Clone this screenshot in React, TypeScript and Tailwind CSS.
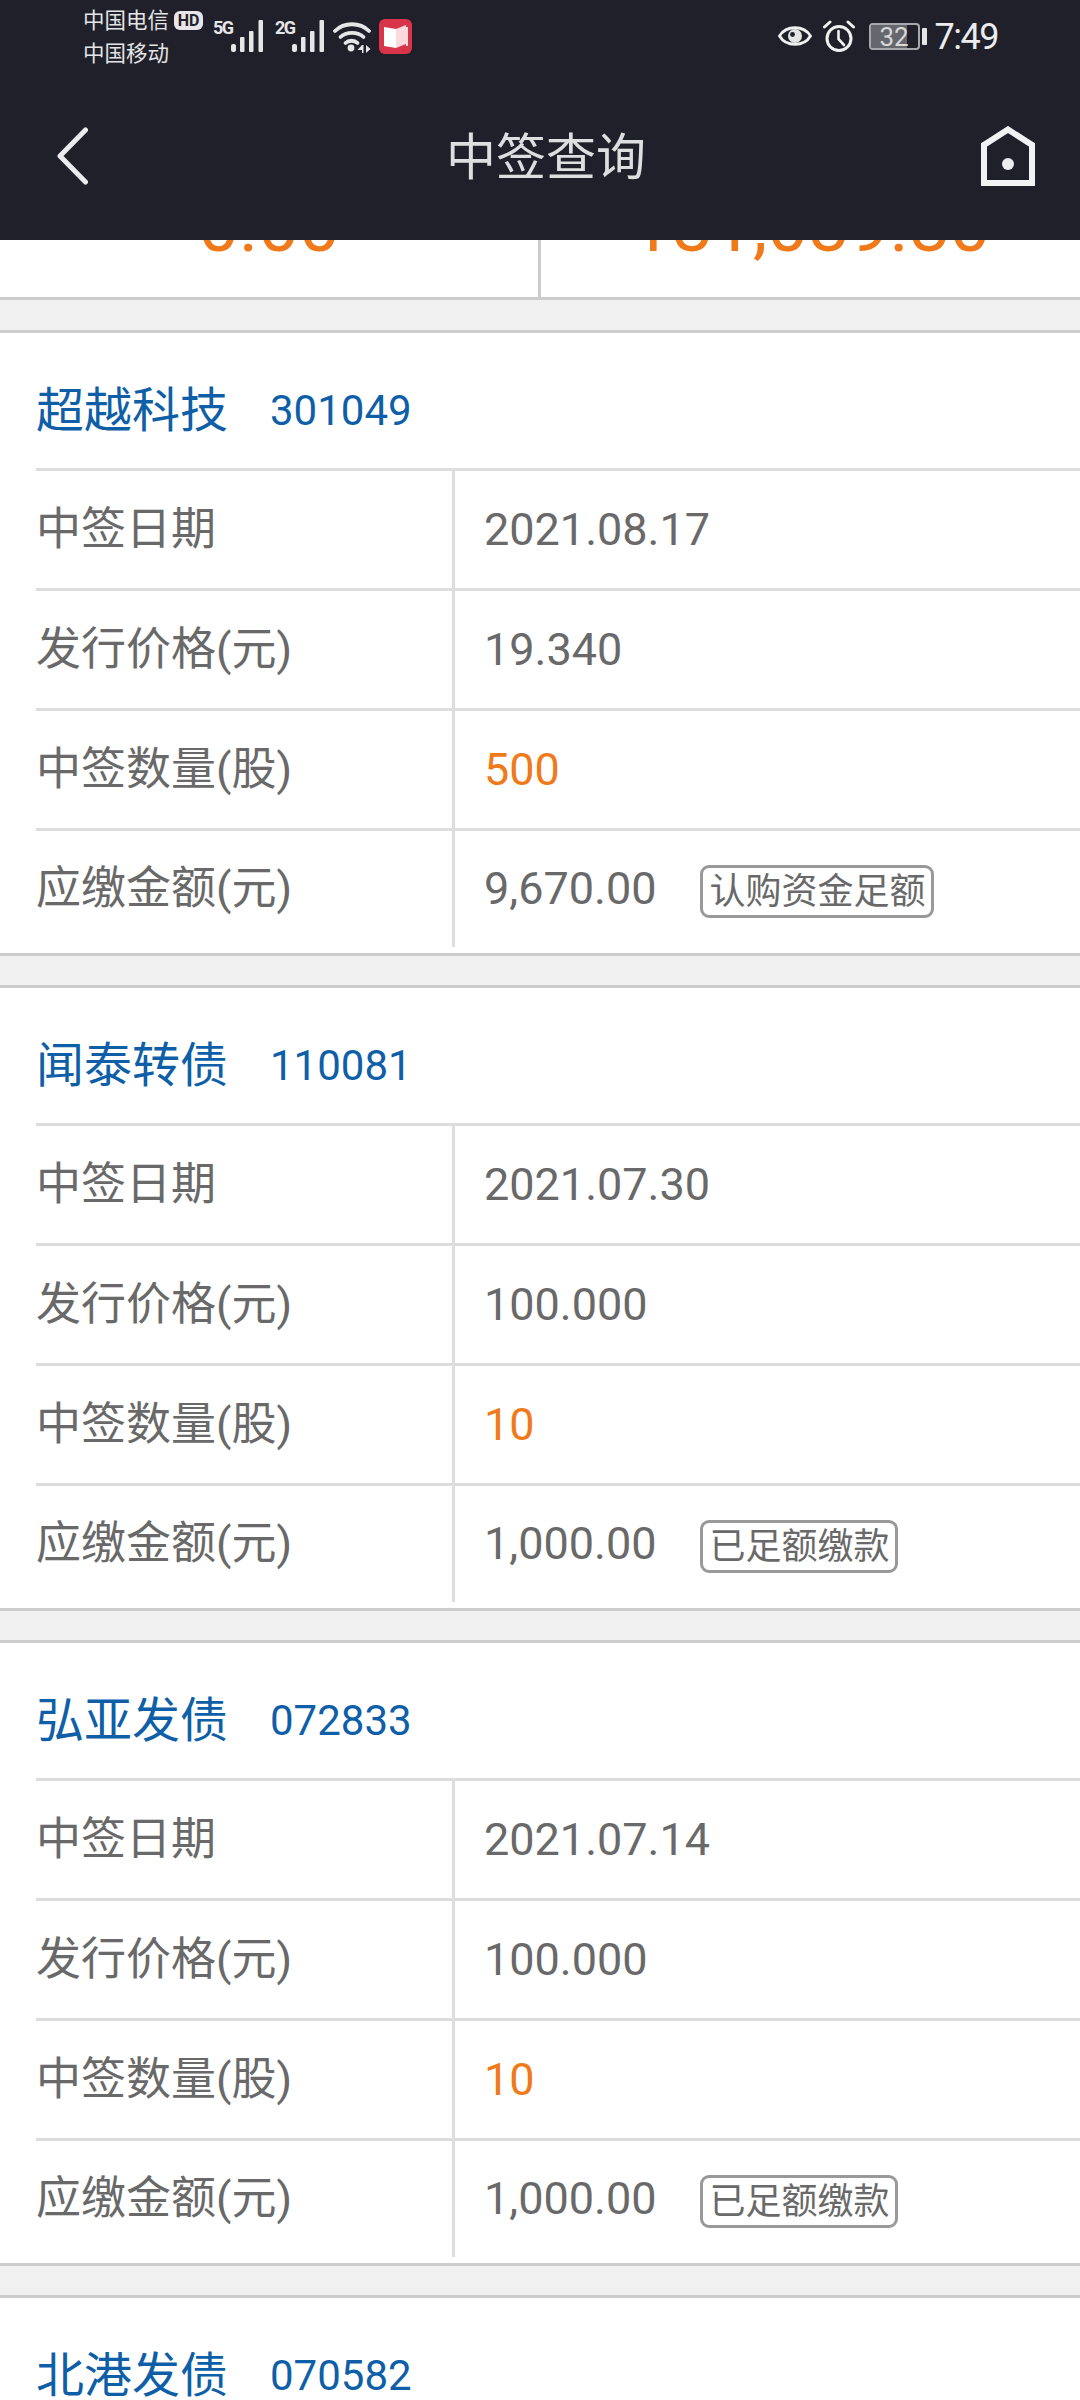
const font = { fontFamily: '"Roboto", "Noto Sans CJK SC", sans-serif' };

type Stock = {
  name: string;
  code: string;
  date: string;
  price: string;
  qty: string;
  amount: string;
  status: string;
};

const stocks: Stock[] = [
  { name: "超越科技", code: "301049", date: "2021.08.17", price: "19.340", qty: "500", amount: "9,670.00", status: "认购资金足额" },
  { name: "闻泰转债", code: "110081", date: "2021.07.30", price: "100.000", qty: "10", amount: "1,000.00", status: "已足额缴款" },
  { name: "弘亚发债", code: "072833", date: "2021.07.14", price: "100.000", qty: "10", amount: "1,000.00", status: "已足额缴款" },
];

function SignalBars() {
  return (
    <svg width="32" height="32" viewBox="0 0 32 32" fill="#e6e6e8">
      <rect x="0" y="24" width="5" height="8" rx="2" />
      <rect x="9" y="17" width="4.5" height="15" rx="1" />
      <rect x="18" y="11" width="4.5" height="21" rx="1" />
      <rect x="27.5" y="0" width="4.5" height="32" rx="1" />
    </svg>
  );
}

function Wifi() {
  return (
    <svg width="38" height="32" viewBox="0 0 38 32" fill="none" stroke="#e6e6e8" strokeWidth="3.8" strokeLinecap="round">
      <path d="M2 10 C11 1 27 1 36 10" />
      <path d="M7.5 16 C13 10.5 25 10.5 30.5 16" />
      <path d="M12.5 22 C15.5 19 21.5 19 24.5 22" />
      <circle cx="18" cy="27" r="3.4" fill="#e6e6e8" stroke="none" />
      <path d="M29 24 L24.5 29 H29 V32 H30.5 V24 Z" fill="#e6e6e8" stroke="none" />
      <path d="M33 24 L37.5 28 L33 32 Z" fill="#e6e6e8" stroke="none" />
    </svg>
  );
}

function BookBadge() {
  return (
    <svg width="33" height="35" viewBox="0 0 33 35">
      <rect width="33" height="35" rx="6" fill="#d8354b" />
      <path d="M5 8 L17 10 V29 L5 27 Z" fill="#ffffff" />
      <path d="M17 10 L27 6 V25 L17 29 Z" fill="#fbd9dc" />
      <rect x="27" y="8" width="2" height="19" fill="#fbd9dc" />
    </svg>
  );
}

function Eye() {
  return (
    <svg width="34" height="26" viewBox="0 0 34 26" fill="none">
      <path d="M1.5 13 C8 2 26 2 32.5 13 C26 24 8 24 1.5 13 Z" stroke="#f0f0f0" strokeWidth="2.8" />
      <circle cx="17" cy="13" r="7" fill="#e4e4e4" />
      <circle cx="14.5" cy="11.5" r="2.4" fill="#1f2029" />
    </svg>
  );
}

function Alarm() {
  return (
    <svg width="32" height="33" viewBox="0 0 32 33" fill="none" stroke="#f0f0f0" strokeLinecap="round">
      <circle cx="16" cy="18.5" r="12" strokeWidth="3" />
      <path d="M15.5 11 V19 L21 25" strokeWidth="2.6" />
      <path d="M1.5 7 L7 2" strokeWidth="3" />
      <path d="M25 2 L30.5 7" strokeWidth="3" />
    </svg>
  );
}

function BackIcon() {
  return (
    <svg width="31" height="58" viewBox="0 0 31 58" fill="none" stroke="#ececee" strokeWidth="5" strokeLinecap="round" strokeLinejoin="round">
      <path d="M28.5 3 L3 29 L28.5 55" />
    </svg>
  );
}

function HomeIcon() {
  return (
    <svg width="54" height="60" viewBox="0 0 54 60" fill="none">
      <path d="M3 57 V19 L27 3.5 L51 19 V57 Z" stroke="#f2f2f4" strokeWidth="6" />
      <circle cx="27" cy="38" r="6" fill="#ececee" />
    </svg>
  );
}

function Row({ label, children, last }: { label: string; children: React.ReactNode; last?: boolean }) {
  return (
    <div className={`flex ${last ? "h-[119px]" : "h-[120px]"} border-t-[3px] border-[#dddddd]`}>
      <div className="w-[416px] flex items-center text-[45px] text-[#696969]">{label}</div>
      <div className="flex-1 flex items-center border-l-[3px] border-[#dddddd] pl-[29px] text-[45px] text-[#696969]">
        {children}
      </div>
    </div>
  );
}

function CardTitle({ name, code }: { name: string; code: string }) {
  return (
    <div className="h-[135px] flex items-center pt-[20px] text-[#0f5fa8]">
      <span className="text-[48px]">{name}</span>
      <span className="ml-[42px] text-[42px]">{code}</span>
    </div>
  );
}

function StockCard({ stock }: { stock: Stock }) {
  return (
    <section>
      <div className="border-y-[3px] border-[#cccccc] bg-white h-[626px] pl-[36px]">
        <CardTitle name={stock.name} code={stock.code} />
        <Row label="中签日期">{stock.date}</Row>
        <Row label="发行价格(元)">{stock.price}</Row>
        <Row label="中签数量(股)">
          <span className="text-[#f07a1a]">{stock.qty}</span>
        </Row>
        <Row label="应缴金额(元)" last>
          <span>{stock.amount}</span>
          <span className="ml-[44px] mt-[5px] h-[53px] flex items-center rounded-[9px] border-[3px] border-[#999999] px-[6px] text-[36px] leading-none">
            {stock.status}
          </span>
        </Row>
      </div>
      <div className="h-[29px] bg-[#f0f0f0]" />
    </section>
  );
}

export default function App() {
  return (
    <div className="w-[1080px] h-[2400px] overflow-hidden bg-[#f0f0f0]" style={font}>
      <header className="h-[240px] bg-[#1f2029] flex flex-col">
        <div className="h-[72px] flex justify-between pl-[83px] pr-[82px]">
          <div className="flex items-start">
            <div className="w-[91px] pt-[4px] text-[21.5px] leading-[33px] text-[#e4e4e6] whitespace-nowrap">
              <div>中国电信</div>
              <div>中国移动</div>
            </div>
            <span className="mt-[11px] h-[19px] w-[29px] flex items-center justify-center rounded-[6px] bg-[#e6e6e8] text-[16px] font-bold leading-none text-[#1f2029]">
              HD
            </span>
            <span className="ml-[10px] mt-[18px] w-[18px] text-[18px] font-bold leading-[20px] text-[#e6e6e8] tracking-[-1.5px]">5G</span>
            <div className="mt-[20px]">
              <SignalBars />
            </div>
            <span className="ml-[12px] mt-[18px] w-[17px] text-[18px] font-bold leading-[20px] text-[#e6e6e8] tracking-[-1.5px]">2G</span>
            <div className="mt-[20px]">
              <SignalBars />
            </div>
            <div className="ml-[9px] mt-[21px]">
              <Wifi />
            </div>
            <div className="ml-[8px] mt-[19px]">
              <BookBadge />
            </div>
          </div>
          <div className="flex items-start">
            <div className="mt-[23px]">
              <Eye />
            </div>
            <div className="ml-[11px] mt-[20px]">
              <Alarm />
            </div>
            <div className="ml-[14px] mt-[23px] relative w-[51px] h-[27px] rounded-[4px] border-2 border-[#a8a8ac] flex items-center justify-center overflow-hidden">
              <div className="absolute left-0 top-0 bottom-0 w-[36px] bg-[#66676c]" />
              <span className="relative text-[26px] leading-none text-[#d8d8da]">32</span>
            </div>
            <div className="ml-[2px] mt-[28px] w-[5px] h-[17px] rounded-[1px] bg-[#e6e6e8]" />
            <span className="ml-[8px] mt-[15px] text-[36px] leading-[44px] tracking-[-1.5px] text-[#ececee]">7:49</span>
          </div>
        </div>
        <div className="flex-1 flex items-center pl-[57px] pr-[45px]">
          <BackIcon />
          <h1 className="flex-1 pl-[23px] pt-[5px] text-center text-[50px] font-normal text-[#dedee0]">中签查询</h1>
          <HomeIcon />
        </div>
      </header>

      <div className="h-[57px] bg-white flex overflow-hidden text-[72.5px] leading-[68px] text-[#f07a1a]">
        <div className="w-[538px] text-center -mt-[47px]">0.00</div>
        <div className="flex-1 border-l-[3px] border-[#cccccc]">
          <div className="text-center -mt-[47px]">181,089.80</div>
        </div>
      </div>
      <div className="border-t-[3px] border-[#cccccc] h-[33px] bg-[#f0f0f0]" />

      {stocks.map((stock) => (
        <StockCard key={stock.code} stock={stock} />
      ))}

      <section className="border-t-[3px] border-[#cccccc] bg-white pl-[36px]">
        <CardTitle name="北港发债" code="070582" />
      </section>
    </div>
  );
}
